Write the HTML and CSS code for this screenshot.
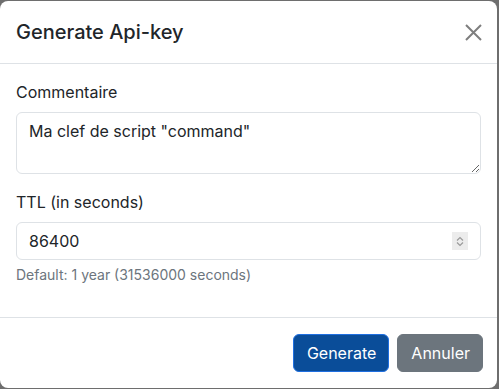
FILE: index.html
```html
<!DOCTYPE html>
<html lang="fr">
<head>
    <meta charset="UTF-8">
    <meta name="viewport" content="width=device-width, initial-scale=1.0">
    <title>Generate Api-key</title>
    <link rel="stylesheet" href="styles.css">
</head>
<body>
    <div class="modal-content">
        <div class="modal-header">
            <h5 class="modal-title">Generate Api-key</h5>
            <button type="button" class="btn-close" aria-label="Close">
                <svg width="17" height="17" viewBox="0 0 17 17">
                    <path d="M1 1L16 16M16 1L1 16" stroke="#000" stroke-width="2" fill="none"/>
                </svg>
            </button>
        </div>

        <div class="modal-body">
            <div class="form-group">
                <label for="comment" class="form-label">Commentaire</label>
                <textarea id="comment" class="form-control" rows="2">Ma clef de script "command"</textarea>
            </div>

            <div class="form-group">
                <label for="ttl" class="form-label">TTL (in seconds)</label>
                <div class="number-wrap">
                    <input type="number" id="ttl" class="form-control" value="86400">
                    <span class="spin">
                        <svg width="16" height="18" viewBox="0 0 16 18">
                            <path d="M5 8.5L8 5.5L11 8.5M5 10.5L8 13.5L11 10.5" stroke="#9a9a9a" stroke-width="1.2" fill="none"/>
                        </svg>
                    </span>
                </div>
                <div class="form-text">Default: 1 year (31536000 seconds)</div>
            </div>
        </div>

        <div class="modal-footer">
            <button type="button" class="btn btn-primary">Generate</button>
            <button type="button" class="btn btn-secondary">Annuler</button>
        </div>
    </div>
</body>
</html>
```

FILE: styles.css
```css
:root {
    --text: #212529;
    --border: #dee2e6;
    --muted: #6c757d;
    --primary: #0a4d99;
    --primary-border: #1f6fe0;
}

* {
    box-sizing: border-box;
}

body {
    margin: 0;
    font-family: 'Inter', 'Noto Sans', sans-serif;
    font-size: 16px;
    line-height: 1.5;
    color: var(--text);
    background-color: #6e6e6e;
    height: 389px;
    overflow: hidden;
}

.modal-content {
    width: 497px;
    margin-top: 1px;
    background: #fff;
    border-radius: 8px;
    overflow: hidden;
}

.modal-header {
    display: flex;
    align-items: center;
    padding: 16px;
    border-bottom: 1px solid var(--border);
}

.modal-title {
    margin: 0;
    font-size: 20px;
    font-weight: 500;
    line-height: 1.5;
}

.btn-close {
    margin-left: auto;
    margin-right: -1px;
    padding: 0;
    border: none;
    background: none;
    opacity: 0.5;
    display: flex;
    cursor: pointer;
}

.modal-body {
    padding: 16px;
}

.form-group {
    margin-bottom: 16px;
}

.form-label {
    display: block;
    margin-bottom: 8px;
}

.form-control {
    display: block;
    width: 100%;
    padding: 6px 12px;
    font-family: inherit;
    font-size: 16px;
    line-height: 1.5;
    color: var(--text);
    background: #fff;
    border: 1px solid var(--border);
    border-radius: 6px;
    outline: none;
}

textarea.form-control {
    height: 62px;
    resize: vertical;
}

.number-wrap {
    position: relative;
}

input[type=number]::-webkit-inner-spin-button {
    -webkit-appearance: none;
    display: none;
}

.spin {
    position: absolute;
    top: 10px;
    right: 13px;
    width: 16px;
    height: 18px;
    background: #ececec;
    display: flex;
}

.form-text {
    margin-top: 4px;
    font-size: 14px;
    color: var(--muted);
}

.modal-footer {
    display: flex;
    justify-content: flex-end;
    padding: 12px 10px 12px 12px;
    border-top: 1px solid var(--border);
}

.btn {
    margin: 4px;
    padding: 6px 12px 6px 13px;
    font-family: inherit;
    font-size: 16px;
    line-height: 1.5;
    color: #fff;
    border: 1px solid transparent;
    border-radius: 6px;
    cursor: pointer;
}

.btn-primary {
    background-color: var(--primary);
    border-color: var(--primary-border);
}

.btn-secondary {
    background-color: var(--muted);
    border-color: var(--muted);
}
```
